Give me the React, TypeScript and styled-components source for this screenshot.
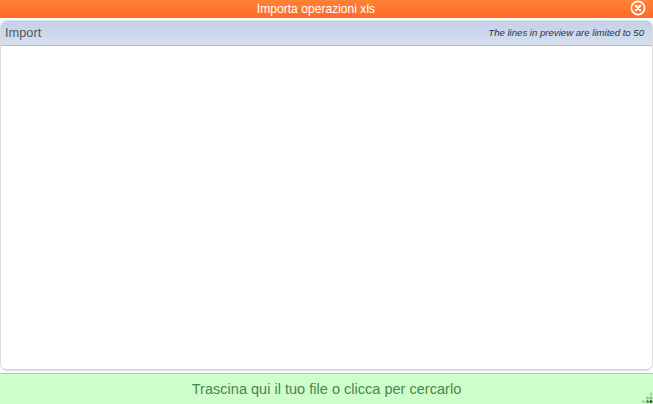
import { createGlobalStyle, styled } from 'styled-components'

const Global = createGlobalStyle`
  html, body {
    margin: 0;
    padding: 0;
    background: #fff;
    font-family: 'Liberation Sans', Arial, sans-serif;
  }
  * {
    box-sizing: border-box;
  }
`

const Wrapper = styled.div`
  width: 653px;
  height: 404px;
  display: flex;
  flex-direction: column;
  overflow: hidden;
  background: #fff;
`

const TitleBar = styled.div`
  height: 18px;
  flex-shrink: 0;
  position: relative;
  display: flex;
  align-items: center;
  justify-content: center;
  padding-right: 21px;
  background: linear-gradient(to bottom, #ff8236, #fe6a27);
  color: #fff;
  font-size: 12.1px;
  line-height: 16px;
`

const CloseIcon = styled.svg`
  position: absolute;
  right: 7px;
  top: 0;
  width: 16px;
  height: 16px;
`

const Panel = styled.div`
  flex: 1;
  margin: 2px 0 2px;
  display: flex;
  flex-direction: column;
  border: 1px solid #dcdcdc;
  border-top-color: #dcdfe4;
  border-width: 1px 1px 2px 1px;
  border-radius: 7px;
  overflow: hidden;
`

const PanelHeader = styled.div`
  height: 25px;
  flex-shrink: 0;
  display: flex;
  align-items: center;
  justify-content: space-between;
  padding: 0 8px 2px 4px;
  background: linear-gradient(to bottom, #c2d0e8, #d6dfee);
  border-bottom: 1px solid #b8bcc4;
`

const PanelTitle = styled.span`
  font-size: 12.8px;
  color: #55585f;
`

const PanelNote = styled.span`
  font-size: 9.6px;
  font-style: italic;
  color: #2a3246;
`

const PanelBody = styled.div`
  flex: 1;
  background: #fff;
`

const DropZone = styled.div`
  height: 31px;
  flex-shrink: 0;
  position: relative;
  display: flex;
  align-items: center;
  justify-content: center;
  background: #ceffcb;
  border-top: 1px solid #b2cbb0;
  color: #4a8450;
  font-size: 14.55px;
  cursor: pointer;
`

const Grip = styled.svg`
  position: absolute;
  right: 0;
  bottom: 0;
  width: 12px;
  height: 12px;
`

function App() {
  return (
    <Wrapper>
      <Global />
      <TitleBar>
        Importa operazioni xls
        <CloseIcon viewBox="0 0 16 16">
          <circle cx="8" cy="8" r="6.6" fill="none" stroke="#fff" strokeWidth="1.6" />
          <path d="M5.8 5.8l4.4 4.4M10.2 5.8l-4.4 4.4" stroke="#fff" strokeWidth="2.2" strokeLinecap="round" />
        </CloseIcon>
      </TitleBar>
      <Panel>
        <PanelHeader>
          <PanelTitle>Import</PanelTitle>
          <PanelNote>The lines in preview are limited to 50</PanelNote>
        </PanelHeader>
        <PanelBody />
      </Panel>
      <DropZone>
        Trascina qui il tuo file o clicca per cercarlo
        <Grip viewBox="0 0 12 12">
          <circle cx="10" cy="2" r="1.5" fill="#a5cfa5" />
          <circle cx="6.5" cy="6" r="1.5" fill="#95c095" />
          <circle cx="10" cy="6" r="1.5" fill="#85b585" />
          <circle cx="2.5" cy="9.5" r="1.5" fill="#a5cfa5" />
          <circle cx="6.5" cy="9.5" r="1.5" fill="#4f8a4f" />
          <circle cx="10" cy="9.5" r="1.5" fill="#1f5a2a" />
        </Grip>
      </DropZone>
    </Wrapper>
  )
}

export default App
